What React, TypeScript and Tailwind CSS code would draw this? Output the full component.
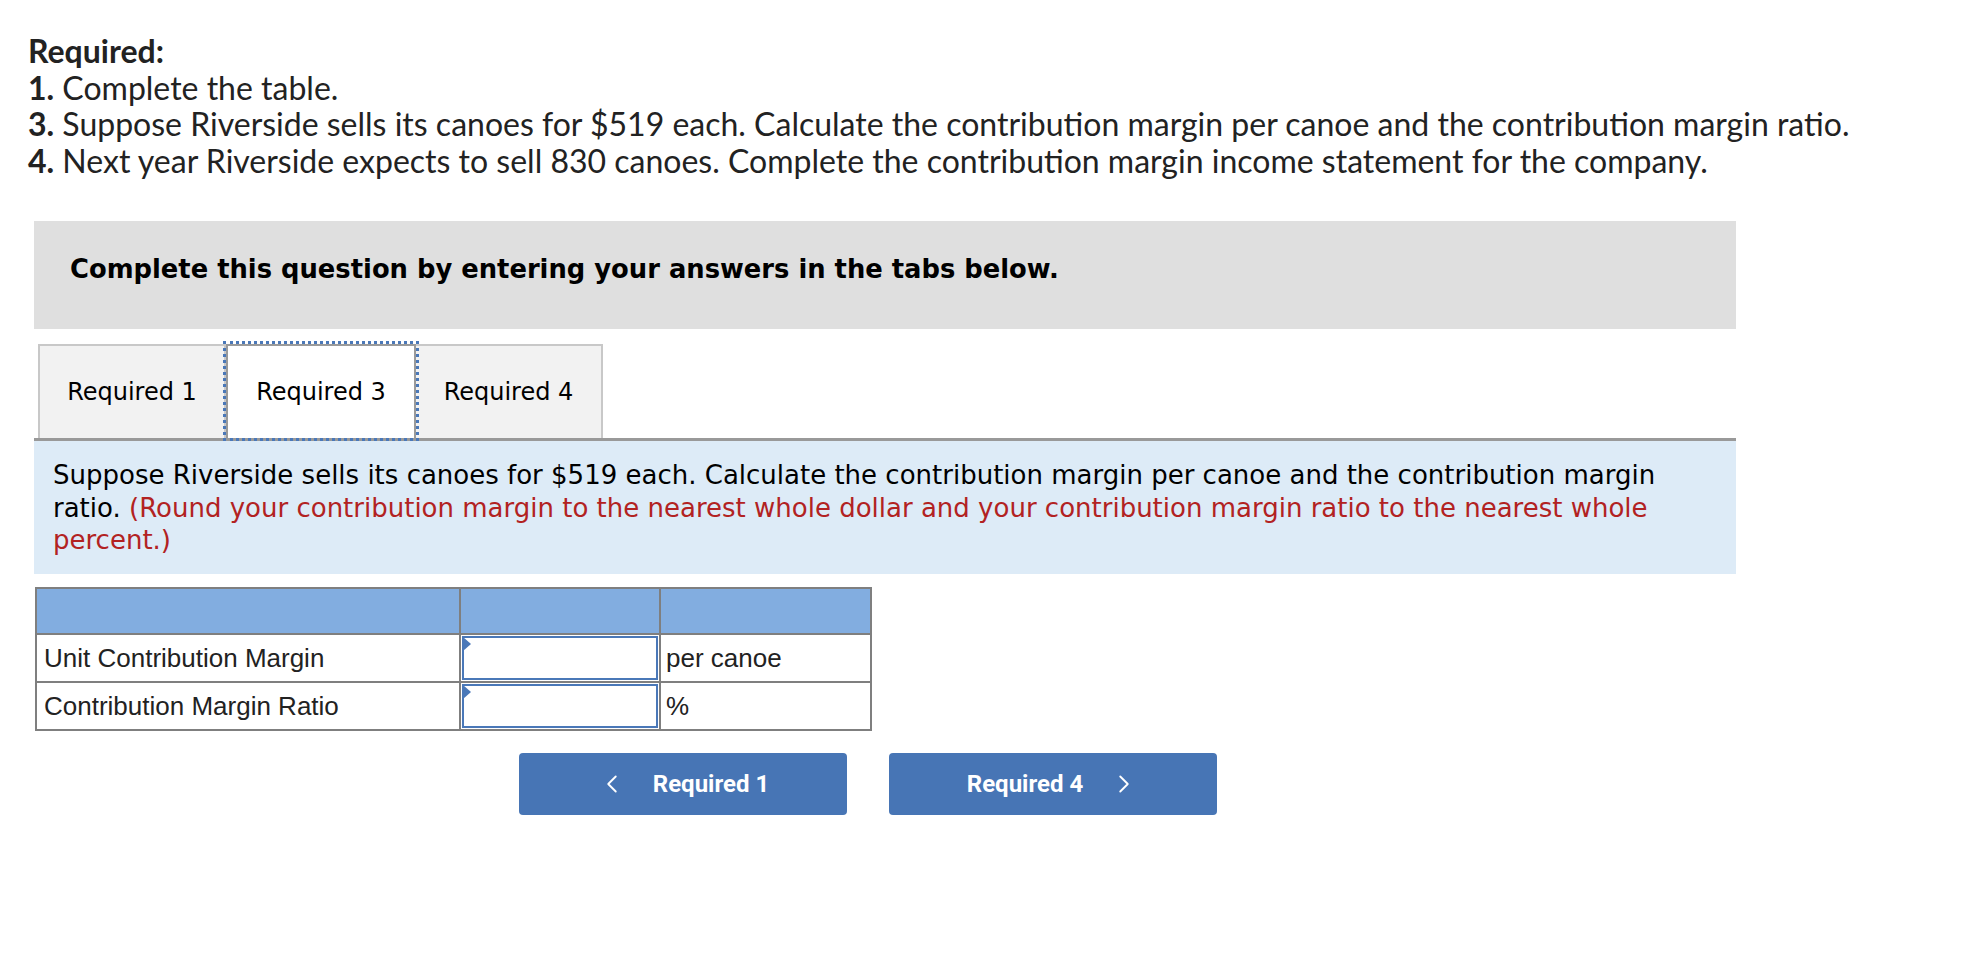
import { ChevronLeft, ChevronRight } from "lucide-react";

const verdana = { fontFamily: '"DejaVu Sans", Verdana, sans-serif' };

type Row = {
  label: string;
  unit: string;
};

const rows: Row[] = [
  { label: "Unit Contribution Margin", unit: "per canoe" },
  { label: "Contribution Margin Ratio", unit: "%" },
];

function InputCell() {
  return (
    <td className="relative p-0 border-2 border-[#7f7f7f] h-[48px]">
      <div className="absolute inset-[1px] border-2 border-[#4a78b8] bg-white" />
      <svg
        className="absolute left-[2px] top-[2px]"
        width="8"
        height="14"
        viewBox="0 0 8 14"
      >
        <polygon points="0,0 8,7 0,14" fill="#4a78b8" />
      </svg>
    </td>
  );
}

export default function App() {
  return (
    <div className="min-h-screen bg-white text-[#222]">
      {/* question text */}
      <div
        className="pl-[28px] pt-[33px] text-[32px] leading-[36.5px] text-[#222]"
        style={{ fontFamily: 'Lato, "Open Sans", sans-serif' }}
      >
        <p className="font-bold">Required:</p>
        <p>
          <span className="font-bold">1.</span> Complete the table.
        </p>
        <p>
          <span className="font-bold">3.</span> Suppose Riverside sells its
          canoes for $519 each. Calculate the contribution margin per canoe and
          the contribution margin ratio.
        </p>
        <p>
          <span className="font-bold">4.</span> Next year Riverside expects to
          sell 830 canoes. Complete the contribution margin income statement for
          the company.
        </p>
      </div>

      <div className="ml-[34px] w-[1702px] mt-[42px]">
        <div
          className="h-[108px] bg-[#dfdfdf] pl-[36px] pt-[29px] text-[25.8px] font-bold text-black"
          style={verdana}
        >
          Complete this question by entering your answers in the tabs below.
        </div>

        {/* tabs */}
        <div className="mt-[15px] flex pl-[4px] text-[24px] text-black" style={verdana}>
          <div className="w-[188px] h-[94px] flex items-center justify-center bg-[#f2f2f2] border-2 border-b-0 border-[#c8c8c8]">
            Required 1
          </div>
          <div className="relative w-[190px] h-[94px] flex items-center justify-center bg-white border-2 border-b-0 border-[#9a9a9a] outline-[3px] outline-dotted outline-[#4a78b8]">
            Required 3
          </div>
          <div className="w-[187px] h-[94px] flex items-center justify-center bg-[#f2f2f2] border-2 border-b-0 border-l-0 border-[#c8c8c8]">
            Required 4
          </div>
        </div>

        <div
          className="border-t-[3px] border-[#999] bg-[#ddebf7] px-[19px] pt-[18px] h-[136px] text-[26px] leading-[32.5px] text-black"
          style={verdana}
        >
          Suppose Riverside sells its canoes for $519 each. Calculate the
          contribution margin per canoe and the contribution margin
          <br />
          ratio.{" "}
          <span className="text-[#b22222]">
            (Round your contribution margin to the nearest whole dollar and your
            contribution margin ratio to the nearest whole
            <br />
            percent.)
          </span>
        </div>

        {/* answer table */}
        <table
          className="mt-[13px] ml-[1px] border-collapse text-[26px] text-[#222]"
          style={{ fontFamily: '"Liberation Sans", Arial, sans-serif' }}
        >
          <colgroup>
            <col className="w-[424px]" />
            <col className="w-[200px]" />
            <col className="w-[211px]" />
          </colgroup>
          <thead>
            <tr className="h-[46px] bg-[#82ade0]">
              <th className="border-2 border-[#7f7f7f]" />
              <th className="border-2 border-[#7f7f7f]" />
              <th className="border-2 border-[#7f7f7f]" />
            </tr>
          </thead>
          <tbody>
            {rows.map((row) => (
              <tr key={row.label} className="h-[48px]">
                <td className="border-2 border-[#7f7f7f] px-[7px] py-0 leading-[44px]">{row.label}</td>
                <InputCell />
                <td className="border-2 border-[#7f7f7f] px-[5px] py-0 leading-[44px]">{row.unit}</td>
              </tr>
            ))}
          </tbody>
        </table>
      </div>

      {/* navigation buttons */}
      <div
        className="w-[1736px] mt-[22px] flex justify-center gap-[42px] text-[24px] font-bold text-white"
        style={{ fontFamily: 'Roboto, "Liberation Sans", sans-serif' }}
      >
        <button className="w-[328px] h-[62px] rounded-[4px] bg-[#4775b5] flex items-center justify-center gap-[26px]">
          <ChevronLeft size={30} strokeWidth={1.5} />
          <span>Required 1</span>
        </button>
        <button className="w-[328px] h-[62px] rounded-[4px] bg-[#4775b5] flex items-center justify-center gap-[26px]">
          <span>Required 4</span>
          <ChevronRight size={30} strokeWidth={1.5} />
        </button>
      </div>
    </div>
  );
}
